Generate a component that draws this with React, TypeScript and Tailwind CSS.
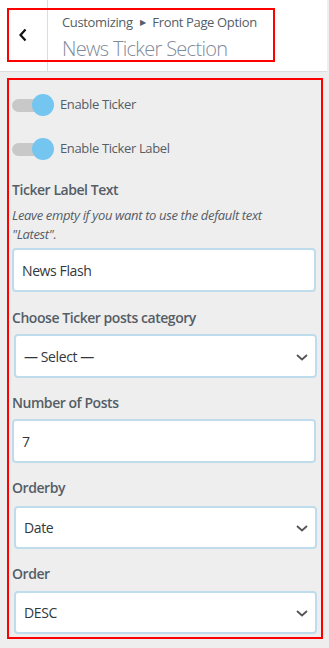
const font = { fontFamily: '"Open Sans", "Noto Sans", Arial, sans-serif' };

const Toggle = ({ label, className }: { label: string; className: string }) => (
  <div className={`flex items-center h-[20px] ${className}`}>
    <div className="relative w-[42px] h-[20px] shrink-0">
      <div className="absolute left-0 top-[4px] w-[30px] h-[13px] rounded-full bg-[#c8c8c8]" />
      <div className="absolute left-[20px] top-[-1px] w-[22px] h-[22px] rounded-full bg-[#74c6f0]" />
    </div>
    <span className="ml-[6px] text-[13px] tracking-[-0.35px] text-[#555d66]">{label}</span>
  </div>
);

const Label = ({ children, className }: { children: string; className: string }) => (
  <div className={`h-[20px] leading-[20px] text-[14px] font-semibold tracking-[-0.45px] text-[#555d66] ${className}`}>
    {children}
  </div>
);

const TextBox = ({ value, className }: { value: string; className: string }) => (
  <div
    className={`w-[304px] h-[44px] flex items-center pl-[8px] bg-white border-2 border-[#bfdcec] rounded-[4px] text-[14px] tracking-[-0.4px] text-[#32373c] ${className}`}
  >
    {value}
  </div>
);

const SelectBox = ({ value, className, h }: { value: string; className: string; h: string }) => (
  <div
    className={`w-[303px] ${h} ml-[2px] flex items-center justify-between pl-[8px] pr-[7px] bg-white border-2 border-[#bfdcec] rounded-[4px] text-[14px] tracking-[-0.4px] text-[#32373c] ${className}`}
  >
    <span>{value}</span>
    <svg width="12" height="7" viewBox="0 0 12 7" className="mt-[2px]">
      <path d="M1 1 L6 5.5 L11 1" fill="none" stroke="#555555" strokeWidth="1.8" />
    </svg>
  </div>
);

export default function App() {
  return (
    <div className="w-[329px] h-[648px] bg-[#eeeeee] overflow-hidden" style={font}>
      {/* header */}
      <div className="relative w-[327px] h-[72px] bg-white border-b border-[#dddddd] flex">
        <div className="w-[48px] h-full border-r border-[#dddddd] flex items-center justify-center">
          <svg width="10" height="14" viewBox="0 0 10 14" className="ml-[-2px] mt-[-1px]">
            <path d="M7.5 1.5 L2.5 7 L7.5 12.5" fill="none" stroke="#111" strokeWidth="2.2" />
          </svg>
        </div>
        <div className="pl-[14px] pt-[12px]">
          <div className="text-[13px] leading-[20px] tracking-[-0.35px] text-[#555d66] flex items-center">
            Customizing
            <span className="text-[8px] mx-[7px] text-[#555d66]">▶</span>
            Front Page Option
          </div>
          <div className="mt-[5px] text-[20px] leading-[24px] font-light tracking-[-0.7px] text-[#7f8b9a]">
            News Ticker Section
          </div>
        </div>
        <div className="absolute left-[7px] top-[8px] w-[268px] h-[54px] border-2 border-[#ff0000]" />
      </div>

      {/* content */}
      <div className="ml-[7px] mt-[6px] w-[316px] h-[561px] border-2 border-[#ff0000] pl-[3px]">
        <Toggle label="Enable Ticker" className="mt-[15px]" />
        <Toggle label="Enable Ticker Label" className="mt-[24px]" />
        <Label className="mt-[21px]">Ticker Label Text</Label>
        <div className="mt-[6px] text-[13px] leading-[19px] italic tracking-[-0.35px] text-[#555d66] pr-[30px]">
          Leave empty if you want to use the default text "Latest".
        </div>
        <TextBox value="News Flash" className="mt-[4px]" />
        <Label className="mt-[16px]">Choose Ticker posts category</Label>
        <SelectBox value="— Select —" className="mt-[6px]" h="h-[44px]" />
        <Label className="mt-[15px]">Number of Posts</Label>
        <TextBox value="7" className="mt-[6px]" />
        <Label className="mt-[15px]">Orderby</Label>
        <SelectBox value="Date" className="mt-[8px]" h="h-[43px]" />
        <Label className="mt-[15px]">Order</Label>
        <SelectBox value="DESC" className="mt-[7px]" h="h-[43px]" />
      </div>
    </div>
  );
}
